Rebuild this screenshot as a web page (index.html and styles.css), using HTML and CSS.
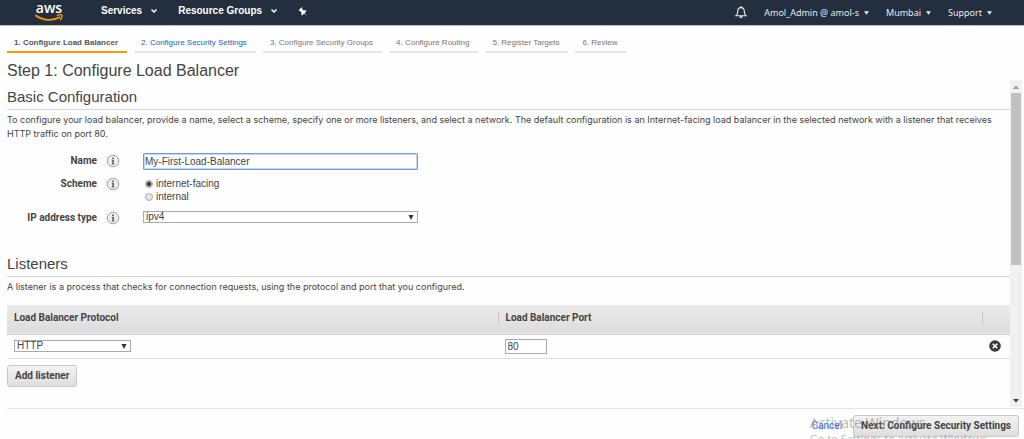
FILE: index.html
```html
<!DOCTYPE html>
<html lang="en">
<head>
<meta charset="utf-8">
<title>Step 1: Configure Load Balancer</title>
<link rel="stylesheet" href="styles.css">
</head>
<body>
<svg width="0" height="0" class="sprite" aria-hidden="true">
  <symbol id="chevron" viewBox="0 0 8 6"><path d="M1.5 1.500 4 4l2.500-2.500" fill="none" stroke="currentColor" stroke-width="1.500"/></symbol>
  <symbol id="caret" viewBox="0 0 6 4"><path d="M0 0h6L3 4z" fill="currentColor"/></symbol>
  <symbol id="info" viewBox="0 0 14 14">
    <circle cx="7" cy="7" r="5.800" fill="#eee" stroke="#a3a3a3"/>
    <path d="M6.200 3.500h1.600V5H6.200zM5.800 5.800h2v4h.7v.8H5.600v-.8h.7V6.600h-.5z" fill="#555"/>
  </symbol>
</svg>

<header class="topbar">
  <a class="logo" href="#" aria-label="aws home">
    <span class="logo-text">aws</span>
    <svg class="logo-smile" viewBox="0 0 28 8" aria-hidden="true">
      <path d="M.5 1.200C7.500 6.800 18 7.400 25 3" fill="none" stroke="#f90" stroke-width="1.700"/>
      <path d="M21.800 1.600c2-.8 4.700-.9 5.100-.4.4.6-.2 3.200-1.700 4.900" fill="none" stroke="#f90" stroke-width="1.400"/>
    </svg>
  </a>
  <nav class="menu" aria-label="Main">
    <button class="menu-item" type="button">Services <svg class="chevron"><use href="#chevron"/></svg></button>
    <button class="menu-item" type="button">Resource Groups <svg class="chevron"><use href="#chevron"/></svg></button>
    <button class="menu-item" type="button" aria-label="Pin shortcuts">
      <svg class="pin" viewBox="0 0 10 10"><path d="M.8 3.600 4 .4l.8.8-.3.900 1.900 1.700 2.200-.2.900.9-2.100 2.100 2 2.600-2.700-1.900-2.100 2.100-.9-.9.200-2.200-1.600-2-1 .2z" fill="currentColor"/></svg>
    </button>
  </nav>
  <nav class="account" aria-label="Account">
    <button class="account-item" type="button" aria-label="Notifications">
      <svg class="bell" viewBox="0 0 12 13"><path d="M1 9.800c1.400-1 1.700-2.200 1.700-4.400C2.700 3 4 1.600 6 1.600S9.300 3 9.300 5.400c0 2.200.3 3.400 1.700 4.400z" fill="none" stroke="currentColor" stroke-width="1.100"/><path d="M5.300.3h1.400v1.400H5.300zM4.300 10.300h3.400Q7.400 12.200 6 12.200t-1.700-1.900z" fill="currentColor"/></svg>
    </button>
    <button class="account-item" type="button">Amol_Admin @ amol-s <svg class="caret"><use href="#caret"/></svg></button>
    <button class="account-item" type="button">Mumbai <svg class="caret"><use href="#caret"/></svg></button>
    <button class="account-item" type="button">Support <svg class="caret"><use href="#caret"/></svg></button>
  </nav>
</header>

<nav class="steps" aria-label="Wizard steps">
  <a class="step step-current" href="#" aria-current="step">1. Configure Load Balancer</a>
  <a class="step step-next" href="#">2. Configure Security Settings</a>
  <a class="step" href="#">3. Configure Security Groups</a>
  <a class="step" href="#">4. Configure Routing</a>
  <a class="step" href="#">5. Register Targets</a>
  <a class="step" href="#">6. Review</a>
</nav>

<h1 class="title">Step 1: Configure Load Balancer</h1>

<div class="pane">
  <main class="content">
    <h2 class="section-title">Basic Configuration</h2>
    <p class="text">To configure your load balancer, provide a name, select a scheme, specify one or more listeners, and select a network. The default configuration is an Internet-facing load balancer in the selected network with a listener that receives HTTP traffic on port 80.</p>

    <form class="form">
      <label class="label" for="name">Name</label>
      <svg class="info"><use href="#info"/></svg>
      <input class="field name-field" id="name" type="text" value="My-First-Load-Balancer">

      <span class="label" id="scheme">Scheme</span>
      <svg class="info"><use href="#info"/></svg>
      <div class="radios" role="radiogroup" aria-labelledby="scheme">
        <label class="radio"><input class="radio-input" type="radio" name="scheme" checked>internet-facing</label>
        <label class="radio"><input class="radio-input" type="radio" name="scheme">internal</label>
      </div>

      <label class="label" for="ip">IP address type</label>
      <svg class="info"><use href="#info"/></svg>
      <select class="select" id="ip"><option>ipv4</option></select>
    </form>

    <h2 class="section-title">Listeners</h2>
    <p class="text">A listener is a process that checks for connection requests, using the protocol and port that you configured.</p>

    <table class="listeners">
      <thead>
        <tr><th class="col-protocol">Load Balancer Protocol</th><th class="divided">Load Balancer Port</th><th class="divided col-remove" aria-label="Remove"></th></tr>
      </thead>
      <tbody>
        <tr>
          <td><select class="select protocol" aria-label="Load Balancer Protocol"><option>HTTP</option></select></td>
          <td><input class="field port" type="text" value="80" aria-label="Load Balancer Port"></td>
          <td><button class="remove" type="button" aria-label="Remove listener"><svg class="remove-icon" viewBox="0 0 12 12"><circle cx="6" cy="6" r="5.800" fill="#3a3a3a"/><path d="m3.700 3.700 4.600 4.600m0-4.600L3.700 8.300" stroke="#fff" stroke-width="1.600"/></svg></button></td>
        </tr>
      </tbody>
    </table>
    <button class="button" type="button">Add listener</button>
  </main>
  <div class="scrollbar" aria-hidden="true">
    <svg class="arrow arrow-up" viewBox="0 0 6 4"><path d="M0 4h6L3 .5z" fill="currentColor"/></svg>
    <div class="track"><div class="thumb"></div></div>
    <svg class="arrow" viewBox="0 0 6 4"><path d="M0 0h6L3 3.500z" fill="currentColor"/></svg>
  </div>
</div>

<footer class="footer">
  <a class="cancel" href="#">Cancel</a>
  <button class="button" type="button">Next: Configure Security Settings</button>
</footer>

<div class="watermark">
  <div class="watermark-title">Activate Windows</div>
  <div>Go to Settings to activate Windows.</div>
</div>
</body>
</html>
```
FILE: styles.css
```css
* { box-sizing: border-box; }

body {
  margin: 0;
  height: 100vh;
  display: flex;
  flex-direction: column;
  position: relative;
  overflow: hidden;
  background: #fefefe;
  color: #444;
  font: 10px/14px "Liberation Sans", sans-serif;
}

a { text-decoration: none; }
button { font: inherit; color: inherit; cursor: pointer; }
.sprite { position: absolute; }

/* Top bar */
.topbar {
  flex: none;
  height: 26px;
  display: flex;
  align-items: center;
  padding: 0 32px 0 35px;
  background: #232f3e;
  border-bottom: 1px solid #b9bdc2;
  color: #fff;
}
.logo {
  display: flex;
  flex-direction: column;
  align-items: center;
  width: 28px;
  margin-right: 38px;
  padding-bottom: 2px;
  color: #fff;
}
.logo-text { font: 600 14px/13px "Open Sans", sans-serif; }
.logo-smile { width: 28px; height: 8px; }
.menu, .account { display: flex; align-items: center; }
.menu { gap: 20px; padding-bottom: 3px; }
.menu-item, .account-item {
  display: flex;
  align-items: center;
  padding: 0;
  border: 0;
  background: none;
}
.menu-item { gap: 8px; font: bold 10px/16px "Liberation Sans", sans-serif; }
.chevron { width: 8px; height: 6px; }
.pin { width: 9px; height: 9px; }
.account { margin-left: auto; gap: 17px; color: #e8eaec; }
.account-item { gap: 5px; font: 9px/16px "Noto Sans", sans-serif; }
.caret { width: 5px; height: 4px; }
.bell { width: 12px; height: 13px; }

/* Wizard steps */
.steps {
  flex: none;
  display: flex;
  gap: 7px;
  padding: 9px 7px 0;
}
.step {
  padding: 1px 9px 1px 7px;
  border-bottom: 2px solid #e6e6e6;
  color: #777;
  font: 8px/14px "Liberation Sans", sans-serif;
}
.step-current { border-color: #f90; color: #555; font-weight: bold; }
.step-next { color: #1166bb; }

.title {
  flex: none;
  margin: 0;
  padding: 9px 7px 0;
  font: 16px/18px "Liberation Sans", sans-serif;
}

/* Scrolling pane */
.pane { flex: 1; min-height: 0; display: flex; }
.content { flex: 1; min-width: 0; padding: 7px 0 0 7px; overflow: hidden; }
.section-title {
  margin: 0 0 3px;
  padding-bottom: 2px;
  border-bottom: 1px solid #d5d5d5;
  font: 15px/20px "Liberation Sans", sans-serif;
}
.text { margin: 0; font: 9px/14px Inter, "Liberation Sans", sans-serif; }

.form {
  display: grid;
  grid-template-columns: 90px 14px minmax(0, 289px);
  column-gap: 9px;
  align-items: start;
  padding: 12px 0 23px;
}
.form > * { margin-bottom: 6px; }
.label, th, .button { font: bold 10px/14px Roboto, sans-serif; }
.label { padding-top: 1px; text-align: right; }
.info { width: 14px; height: 14px; margin-top: 1px; }
.form > .field, .form > .radios, .form > .select { margin-left: 14px; }

.field, .select {
  padding: 0 2px;
  border: 1px solid #aaa;
  background: #fff;
  color: #444;
  font: inherit;
}
.name-field {
  height: 17px;
  padding: 0 1px;
  border: 1px solid #6d9be8;
  border-radius: 1px;
  outline: 1px solid #c3d6f6;
  outline-offset: -2px;
}
.select {
  height: 12px;
  appearance: none;
  line-height: 10px;
  background: #fff url("data:image/svg+xml,%3Csvg xmlns='http://www.w3.org/2000/svg' viewBox='0 0 6 5'%3E%3Cpath d='M.5 0h5L3 5z' fill='%23333'/%3E%3C/svg%3E") no-repeat right 3px center / 6px 5px;
}
.form > .select { margin-top: 1px; }
.radios { display: flex; flex-direction: column; padding-top: 1px; }
.radio { display: flex; align-items: center; gap: 3px; height: 13px; padding-left: 2px; }
.form > .radios { margin-bottom: 7px; }
.radio-input {
  appearance: none;
  width: 8px;
  height: 8px;
  margin: 0;
  border: 1px solid #aaa;
  border-radius: 50%;
  background: #e6e6e6;
}
.radio-input:checked { background: radial-gradient(circle, #444 2px, #eee 3px); }

/* Listener table */
.listeners {
  width: 100%;
  margin: 11px 0 6px;
  border-collapse: collapse;
  table-layout: fixed;
}
th {
  position: relative;
  height: 29px;
  padding: 0 7px 2px;
  text-align: left;
}
thead tr { background: linear-gradient(#ebebeb, #dcdcdc); border-bottom: 1px solid #ccc; }
tbody tr { border-bottom: 1px solid #ddd; }
td { height: 24px; padding: 0 7px; vertical-align: middle; }
.col-protocol { width: 49%; }
.col-remove { width: 28px; }
.divided::before {
  content: "";
  position: absolute;
  left: 0;
  top: 7px;
  height: 13px;
  border-left: 1px solid #c8c8c8;
}
.protocol { display: block; width: 117px; }
.port { display: block; width: 42px; height: 15px; padding: 0 1px; }
.remove { display: block; padding: 0; border: 0; background: none; }
.remove-icon { display: block; width: 12px; height: 12px; }

.button {
  height: 22px;
  padding: 0 7px;
  border: 1px solid #c8c8c8;
  border-radius: 3px;
  background: linear-gradient(#f3f3f3, #dedede);
}

/* Scrollbar */
.scrollbar {
  width: 12px;
  margin: 0 2px 1px 0;
  display: flex;
  flex-direction: column;
  align-items: center;
  background: #f1f1f1;
  color: #444;
}
.arrow { flex: none; width: 6px; height: 4px; margin: 4px 0; }
.arrow-up { color: #999; margin: 5px 0 4px; }
.track { flex: 1; width: 10px; }
.thumb { height: 57%; background: #c1c1c1; }

.footer {
  flex: none;
  display: flex;
  justify-content: flex-end;
  align-items: center;
  gap: 11px;
  margin-left: 7px;
  padding: 6px 5px 2px 0;
  border-top: 1px solid #e4e4e4;
}
.cancel { color: #1a73e8; font: 10px/14px Roboto, sans-serif; }

/* Operating system notice lying over the page corner */
.watermark {
  position: absolute;
  right: 34px;
  bottom: -8px;
  color: rgba(120, 120, 120, .5);
  font: 11px/16px "Open Sans", sans-serif;
  pointer-events: none;
}
.watermark-title { font: 14px/17px "Noto Sans", sans-serif; }
```
